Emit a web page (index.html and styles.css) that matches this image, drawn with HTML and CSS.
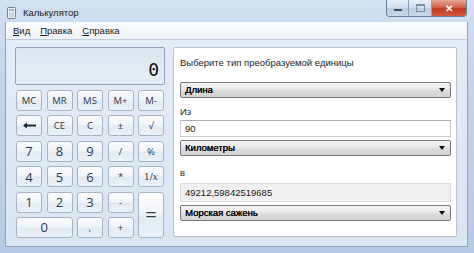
FILE: index.html
```html
<!DOCTYPE html>
<html lang="ru">
<head>
  <meta charset="UTF-8">
  <title>Калькулятор</title>
  <link rel="stylesheet" href="styles.css">
</head>
<body>
  <div class="window">
    <div class="titlebar">
      <svg class="app-icon" width="9" height="12" viewBox="0 0 9 12">
        <rect x="0.5" y="0.5" width="8" height="11" rx="1" fill="#e8eef6" stroke="#6f8296"/>
        <rect x="2" y="2" width="5" height="2" fill="#9fb3c9"/>
        <rect x="2" y="5.5" width="5" height="4.5" fill="#c9d6e4"/>
      </svg>
      <span class="title">Калькулятор</span>
      <div class="caption">
        <span class="cap cap-min"><i></i></span>
        <span class="cap cap-max"><i></i></span>
        <span class="cap cap-close">✕</span>
      </div>
    </div>

    <div class="client">
      <div class="menubar">
        <span><u>В</u>ид</span>
        <span><u>П</u>равка</span>
        <span><u>С</u>правка</span>
      </div>

      <div class="content">
        <div class="calc">
          <div class="display">0</div>
          <div class="keys">
            <button class="key small">MC</button>
            <button class="key small">MR</button>
            <button class="key small">MS</button>
            <button class="key small">M+</button>
            <button class="key small">M-</button>

            <button class="key">
              <svg width="13" height="7" viewBox="0 0 13 7"><path d="M1 3.5H13" stroke="#1c2a3a" stroke-width="2"/><path d="M0 3.5L4 0.5V6.5Z" fill="#1c2a3a"/></svg>
            </button>
            <button class="key small">CE</button>
            <button class="key small">C</button>
            <button class="key small">±</button>
            <button class="key small">√</button>

            <button class="key">7</button>
            <button class="key">8</button>
            <button class="key">9</button>
            <button class="key small">/</button>
            <button class="key small">%</button>

            <button class="key">4</button>
            <button class="key">5</button>
            <button class="key">6</button>
            <button class="key small">*</button>
            <button class="key small frac">1/<i>x</i></button>

            <button class="key">1</button>
            <button class="key">2</button>
            <button class="key">3</button>
            <button class="key small">-</button>
            <button class="key equals">=</button>

            <button class="key zero">0</button>
            <button class="key small">,</button>
            <button class="key small">+</button>
          </div>
        </div>

        <div class="converter">
          <div class="label first">Выберите тип преобразуемой единицы</div>
          <div class="select sel-type">Длина</div>
          <div class="label">Из</div>
          <div class="field">90</div>
          <div class="select">Километры</div>
          <div class="label gap">в</div>
          <div class="field result">49212,59842519685</div>
          <div class="select">Морская сажень</div>
        </div>
      </div>
    </div>
  </div>
</body>
</html>
```

FILE: styles.css
```css
body {
  margin: 0;
  padding: 0;
  font-family: "Liberation Sans", Arial, sans-serif;
  background: #b9cde3;
}
.window {
  width: 474px;
  height: 253px;
  display: flex;
  flex-direction: column;
  background: linear-gradient(180deg, #d3e1f0 0%, #c2d5ea 30%, #b6cbe3 100%);
  overflow: hidden;
}
.titlebar {
  height: 22px;
  display: flex;
  align-items: flex-start;
  padding-left: 7px;
}
.app-icon {
  margin-top: 7px;
}
.title {
  margin-left: 7px;
  margin-top: 6px;
  font-size: 9.5px;
  line-height: 13px;
  color: #1a1a1a;
}
.caption {
  margin-left: auto;
  margin-right: 7px;
  display: flex;
  height: 16px;
  border: 1px solid #6c7f98;
  border-top: none;
  border-radius: 0 0 4px 4px;
  overflow: hidden;
}
.cap {
  display: flex;
  align-items: center;
  justify-content: center;
  background: linear-gradient(180deg, #e7eef7 0%, #cfdcec 50%, #bccde2 51%, #c9d8ea 100%);
  border-left: 1px solid #8c9fb6;
}
.cap-min {
  width: 21px;
  border-left: none;
}
.cap-min i {
  width: 8px;
  height: 2px;
  margin-top: 4px;
  background: #3d4f66;
}
.cap-max {
  width: 22px;
}
.cap-max i {
  width: 7px;
  height: 5px;
  border: 1px solid #7e90a6;
  border-top-width: 2px;
}
.cap-close {
  width: 34px;
  color: #fff;
  font-size: 10px;
  font-weight: bold;
  background: linear-gradient(180deg, #e6a596 0%, #d2634f 45%, #c0391f 55%, #d35a3f 100%);
}
.client {
  flex: 1;
  margin: 0 6px 6px 5px;
  display: flex;
  flex-direction: column;
  background: #dfe8f4;
  border: 1px solid #8fa3bd;
  border-top: none;
}
.menubar {
  height: 17px;
  display: flex;
  align-items: center;
  gap: 10px;
  padding-left: 7px;
  font-size: 9.5px;
  color: #1a1a1a;
  background: linear-gradient(180deg, #fbfcfe 0%, #eef2f8 100%);
  border-bottom: 1px solid #c0cddd;
}
.content {
  flex: 1;
  display: flex;
  align-items: flex-start;
  padding: 7px 0 0 9px;
  background: linear-gradient(180deg, #e3ebf6 0%, #dae5f2 100%);
}
.calc {
  width: 150px;
}
.display {
  border: 1px solid #93a5bc;
  border-radius: 2px;
  background: linear-gradient(180deg, #dde6f0 0%, #e6edf5 100%);
  font-family: "DejaVu Sans Mono", monospace;
  font-size: 18px;
  text-align: right;
  padding: 12px 5px 0 0;
  box-sizing: border-box;
  height: 38px;
  line-height: 20px;
  color: #111;
}
.keys {
  margin-top: 5px;
  margin-left: 1px;
  display: grid;
  grid-template-columns: repeat(5, 26px);
  grid-auto-rows: 21px;
  column-gap: 4.5px;
  row-gap: 4.4px;
}
.key {
  margin: 0;
  padding: 0;
  display: flex;
  align-items: center;
  justify-content: center;
  border: 1px solid #a6b4c7;
  border-radius: 3px;
  background: linear-gradient(180deg, #fbfcfe 0%, #f1f4f9 45%, #e4eaf2 55%, #eaf0f7 100%);
  font-family: "Open Sans", sans-serif;
  font-size: 13px;
  color: #2a3a4d;
}
.key.small {
  font-size: 9.5px;
}
.key.frac {
  font-family: "DejaVu Serif", serif;
  font-size: 9px;
}
.key.equals {
  grid-row: span 2;
  font-size: 20px;
}
.key.zero {
  grid-column: span 2;
}
.converter {
  margin-left: 8px;
  width: 284px;
  height: 190px;
  box-sizing: border-box;
  border: 1px solid #b9c2cd;
  border-radius: 2px;
  background: #fff;
  padding: 0 5px 0 6px;
  display: flex;
  flex-direction: column;
}
.label {
  font-size: 9.5px;
  line-height: 12px;
  color: #1e1e1e;
  margin-top: 8px;
}
.label.first {
  margin-top: 9px;
  margin-bottom: 13px;
}
.label.gap {
  margin-top: 11px;
}
.select {
  height: 16px;
  box-sizing: border-box;
  margin-top: 3px;
  padding-left: 4px;
  border: 1px solid #7a7a7a;
  border-radius: 2px;
  background: linear-gradient(180deg, #f4f4f4 0%, #e9e9e9 45%, #dcdcdc 55%, #d2d2d2 100%);
  font-size: 9.5px;
  line-height: 14px;
  color: #000;
  text-shadow: 0.3px 0 0 #000;
  position: relative;
}
.select::after {
  content: "";
  position: absolute;
  right: 5px;
  top: 5px;
  border-left: 3.5px solid transparent;
  border-right: 3.5px solid transparent;
  border-top: 4px solid #000;
}
.sel-type {
  margin-top: 0;
}
.field {
  height: 17px;
  box-sizing: border-box;
  margin-top: 2px;
  padding-left: 4px;
  border: 1px solid #c8ccd2;
  border-top-color: #abadb3;
  background: #fff;
  font-size: 9.5px;
  line-height: 15px;
  color: #1a1a1a;
}
.field.result {
  height: 19px;
  margin-top: 4px;
  line-height: 17px;
  background: #f0f0f0;
  border-color: #dcdcdc;
}
```
